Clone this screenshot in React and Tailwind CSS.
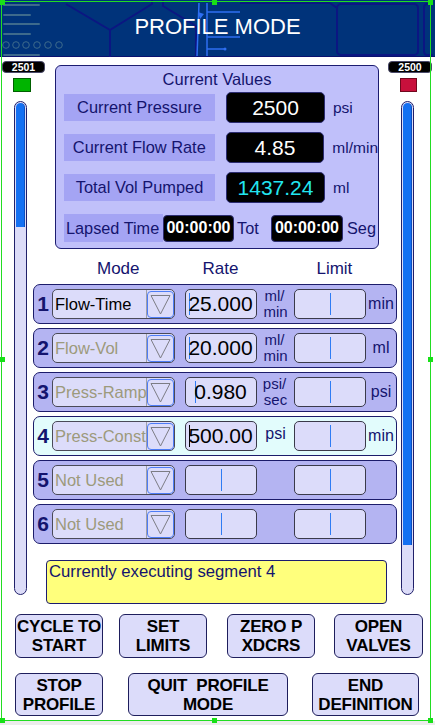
import React from "react";

const NAVY = "text-[#14146e]";

const rows = [
  { n: 1, mode: "Flow-Time", active: true, rate: "25.000", unit: ["ml/", "min"], limitUnit: "min" },
  { n: 2, mode: "Flow-Vol", rate: "20.000", unit: ["ml/", "min"], limitUnit: "ml" },
  { n: 3, mode: "Press-Ramp", rate: "0.980", unit: ["psi/", "sec"], limitUnit: "psi" },
  { n: 4, mode: "Press-Const", rate: "500.00", focus: true, unit: ["psi"], limitUnit: "min", current: true },
  { n: 5, mode: "Not Used", rate: "", unit: [], limitUnit: "" },
  { n: 6, mode: "Not Used", rate: "", unit: [], limitUnit: "" },
];

const HeaderArt = () => (
  <svg className="absolute inset-0" width="435" height="57" viewBox="0 0 435 57" fill="none">
    <g stroke="#3d6a8c" strokeWidth="2" strokeLinecap="round">
      <line x1="4" y1="5" x2="39" y2="5" />
      <line x1="4" y1="15" x2="30" y2="15" />
      <line x1="4" y1="24" x2="39" y2="24" />
      <line x1="4" y1="34" x2="30" y2="34" />
      <line x1="4" y1="55" x2="39" y2="55" />
    </g>
    <g stroke="#3d6a8c" strokeWidth="1">
      {[6, 16, 26, 37, 48, 59].map((cx) => (
        <circle key={cx} cx={cx} cy="45" r="3.3" />
      ))}
    </g>
    <g stroke="#0b1682" strokeWidth="2" strokeLinejoin="round">
      <polyline points="66,4 110,30 152,4 152,0" />
      <line x1="110" y1="30" x2="110" y2="57" />
      <polyline points="163,0 163,6 196,26 196,57" />
      <polyline points="240,3 330,3 337,8" />
      <rect x="337" y="4" width="81" height="51" rx="4" />
      <path d="M433 4 H427 Q424 4 424 8 V51 Q424 55 427 55 H433" />
    </g>
    <g stroke="#2e6ff2" strokeWidth="1.5">
      <line x1="199" y1="3" x2="197" y2="56" />
      <line x1="207" y1="3" x2="207" y2="56" />
      <line x1="207" y1="12" x2="240" y2="12" />
      <line x1="207" y1="37" x2="240" y2="37" />
      <line x1="207" y1="49" x2="224" y2="49" />
    </g>
    <polygon points="198,12 204,14 200,19" fill="#2e6ff2" />
    <circle cx="225" cy="49" r="1.5" fill="#2e6ff2" />
  </svg>
);

const Badge = ({ value, className }) => (
  <div
    className={`h-[12px] rounded-[4px] bg-black border border-[#4a4a6a] text-white font-bold text-[10.5px] leading-[10px] flex items-center justify-center ${className}`}
  >
    {value}
  </div>
);

const Tube = ({ fill, className }) => (
  <div
    className={`w-[13px] h-[494px] rounded-full border border-[#20206a] bg-[#dcdcf8] overflow-hidden p-px ${className}`}
  >
    <div className="w-full rounded-t-full bg-[#1470f2] border-r border-[#0a4fc0]" style={{ height: fill }} />
  </div>
);

const Caret = ({ color }) => <span className={`inline-block w-px h-[22px] shrink-0 ${color}`} />;

const InputBox = ({ text, focus }) => (
  <div className="w-[72px] h-[30px] rounded-[5px] border border-[#3a3a4a] bg-[#dcdcfa] flex items-center justify-center overflow-hidden">
    {text ? (
      <>
        <Caret color={focus ? "bg-black" : "bg-[#2f7cf4]"} />
        <span className="-ml-[2px] text-[21px] leading-[24px] text-black whitespace-nowrap">{text}</span>
      </>
    ) : (
      <Caret color="bg-[#2f7cf4]" />
    )}
  </div>
);

const Dropdown = ({ text, active }) => (
  <div className="w-[123px] h-[30px] rounded-[5px] border border-[#4a4a58] bg-[#dcdcfa] flex items-center overflow-hidden">
    <div
      className={`flex-1 h-full border-r border-[#a0a0a8] pl-[2px] flex items-center overflow-hidden whitespace-nowrap text-[16.5px] ${
        active ? "text-black" : "text-[#9c9a7c]"
      }`}
    >
      {text}
    </div>
    <div className="w-[27px] h-[27px] rounded-[4px] border border-[#4d7cf6] flex items-center justify-center">
      <svg width="21" height="21" viewBox="0 0 21 21" fill="none">
        <polygon points="1,1.5 20,1.5 10.5,20" stroke="#7c7c84" strokeWidth="1" />
      </svg>
    </div>
  </div>
);

const ValueRow = ({ label, value, unit, cyan }) => (
  <div className="flex items-center h-[31px] pl-[8px]">
    <div className={`w-[151px] h-[27px] bg-[#a4a4f4] flex items-center justify-center whitespace-nowrap text-[16.4px] ${NAVY}`}>
      {label}
    </div>
    <div
      className={`ml-[11px] w-[99px] h-[31px] rounded-[5px] bg-black border border-[#2c2c72] flex items-center justify-center text-[21px] ${
        cyan ? "text-[#22e6f0]" : "text-white"
      }`}
    >
      {value}
    </div>
    <div className={`ml-[8px] text-[15.5px] ${NAVY}`}>{unit}</div>
  </div>
);

const TimeBox = ({ w }) => (
  <div className={`${w} h-[27px] rounded-[4px] bg-black border border-[#2c2c72] flex items-center justify-center text-white font-bold text-[16px]`}>
    00:00:00
  </div>
);

const SegmentRow = ({ row }) => (
  <div
    className={`h-[40px] rounded-[7px] border border-[#1c1c6a] flex items-center ${
      row.current ? "bg-[#e2fcfc]" : "bg-[#b4b4f2]"
    }`}
  >
    <div className={`w-[18px] text-center font-bold text-[21px] leading-[24px] ${NAVY}`}>{row.n}</div>
    <Dropdown text={row.mode} active={row.active} />
    <div className="ml-[10px]">
      <InputBox text={row.rate} focus={row.focus} />
    </div>
    <div className={`w-[37px] flex flex-col items-center ${NAVY}`}>
      {row.unit.length === 2 ? (
        <>
          <span className="text-[15px] leading-[16px] pr-[2px]">{row.unit[0]}</span>
          <span className="text-[15px] leading-[16px]">{row.unit[1]}</span>
        </>
      ) : row.unit.length === 1 ? (
        <span className="text-[16px] leading-[18px] -mt-[4px]">{row.unit[0]}</span>
      ) : null}
    </div>
    <InputBox text="" />
    <div className={`w-[30px] text-center text-[16px] ${NAVY}`}>{row.limitUnit}</div>
  </div>
);

const Button = ({ children, w }) => (
  <div
    className={`${w} h-full rounded-[6px] border-[1.5px] border-[#1e1e5c] bg-[#dcdcfa] flex items-center justify-center text-center text-black font-bold text-[17px] leading-[19px] tracking-[-0.2px] whitespace-pre`}
  >
    {children}
  </div>
);

const Handle = ({ className }) => <div className={`absolute w-[5px] h-[5px] bg-[#18e018] ${className}`} />;

export default function App() {
  return (
    <div className="relative w-[435px] h-[725px] bg-white overflow-hidden font-['Liberation_Sans',Arial,sans-serif]">
      {/* Header */}
      <div className="relative h-[57px] bg-[#00337a] border-b border-[#0a1170] flex items-center justify-center">
        <HeaderArt />
        <h1 className="relative text-white text-[22px] leading-[26px] -mt-[2px]">PROFILE MODE</h1>
      </div>

      {/* Body */}
      <div className="flex h-[548px]">
        {/* Left gauge */}
        <div className="w-[33px] shrink-0 flex flex-col pt-[4px]">
          <Badge value="2501" className="ml-[2px] w-[43px] shrink-0" />
          <div className="mt-[5px] ml-[13px] w-[18px] h-[14px] bg-[#00b400] border border-[#006000]" />
          <Tube fill={124} className="mt-[9px] ml-[14px]" />
        </div>

        {/* Center */}
        <div className="w-[364px] shrink-0 flex flex-col pt-[8px]">
          {/* Current values */}
          <div className="ml-[22px] w-[324px] h-[184px] rounded-[6px] border border-[#1c1c70] bg-[#c0c0fa] flex flex-col">
            <div className={`h-[26px] flex items-center justify-center text-[16.5px] ${NAVY}`}>Current Values</div>
            <div className="flex flex-col gap-[9px]">
              <ValueRow label="Current Pressure" value="2500" unit="psi" />
              <ValueRow label="Current Flow Rate" value="4.85" unit="ml/min" />
              <ValueRow label="Total Vol Pumped" value="1437.24" unit="ml" cyan />
            </div>
            <div className="mt-[11px] pl-[8px] flex items-center h-[28px]">
              <div className={`w-[99px] h-[28px] bg-[#a4a4f4] flex items-center pl-[2px] whitespace-nowrap text-[16.3px] ${NAVY}`}>
                Lapsed Time
              </div>
              <TimeBox w="w-[71px]" />
              <div className={`w-[37px] pl-[3px] text-[16.3px] ${NAVY}`}>Tot</div>
              <TimeBox w="w-[72px]" />
              <div className={`ml-[4px] text-[16.3px] ${NAVY}`}>Seg</div>
            </div>
          </div>

          {/* Column headings */}
          <div className={`h-[35px] flex items-end pb-[6px] text-[17px] leading-[18px] ${NAVY}`}>
            <span className="ml-[64px]">Mode</span>
            <span className="ml-[63px]">Rate</span>
            <span className="ml-[78px]">Limit</span>
          </div>

          {/* Segments */}
          <div className="flex flex-col gap-[4px]">
            {rows.map((row) => (
              <SegmentRow key={row.n} row={row} />
            ))}
          </div>

          {/* Status */}
          <div className={`mt-[16px] ml-[13px] w-[341px] h-[44px] rounded-[4px] border border-[#1c1c70] bg-[#ffff7c] pl-[2px] pt-[1px] text-[16.7px] leading-[20px] ${NAVY}`}>
            Currently executing segment 4
          </div>
        </div>

        {/* Right gauge */}
        <div className="w-[38px] shrink-0 flex flex-col pt-[4px]">
          <Badge value="2500" className="-ml-[9px] w-[44px] shrink-0" />
          <div className="mt-[5px] ml-[3px] w-[17px] h-[14px] bg-[#c8103c] border border-[#70081e]" />
          <Tube fill={442} className="mt-[9px] ml-[4px]" />
        </div>
      </div>

      {/* Buttons */}
      <div className="mt-[9px] flex flex-col gap-[15px]">
        <div className="h-[44px] flex pl-[15px]">
          <Button w="w-[88px]">{"CYCLE TO\nSTART"}</Button>
          <div className="ml-[16px] h-full"><Button w="w-[88px]">{"SET\nLIMITS"}</Button></div>
          <div className="ml-[20px] h-full"><Button w="w-[88px]">{"ZERO P\nXDCRS"}</Button></div>
          <div className="ml-[19px] h-full"><Button w="w-[89px]">{"OPEN\nVALVES"}</Button></div>
        </div>
        <div className="h-[43px] flex pl-[15px]">
          <Button w="w-[88px]">{"STOP\nPROFILE"}</Button>
          <div className="ml-[25px] h-full"><Button w="w-[160px]">{"QUIT  PROFILE\nMODE"}</Button></div>
          <div className="ml-[24px] h-full"><Button w="w-[107px]">{"END\nDEFINITION"}</Button></div>
        </div>
      </div>

      {/* Selection frame */}
      <div className="absolute left-0 right-0 bottom-0 h-[4px] bg-[#ececec]" />
      <div className="absolute left-[1px] top-[1px] w-[430px] h-[720px] border border-[#22dd22] pointer-events-none" />
      <Handle className="left-[0px] top-[0px]" />
      <Handle className="left-[212px] top-[0px]" />
      <Handle className="left-[428px] top-[0px]" />
      <Handle className="left-[0px] top-[357px]" />
      <Handle className="left-[428px] top-[357px]" />
      <Handle className="left-[0px] top-[718px]" />
      <Handle className="left-[212px] top-[718px]" />
      <Handle className="left-[428px] top-[718px]" />
    </div>
  );
}
